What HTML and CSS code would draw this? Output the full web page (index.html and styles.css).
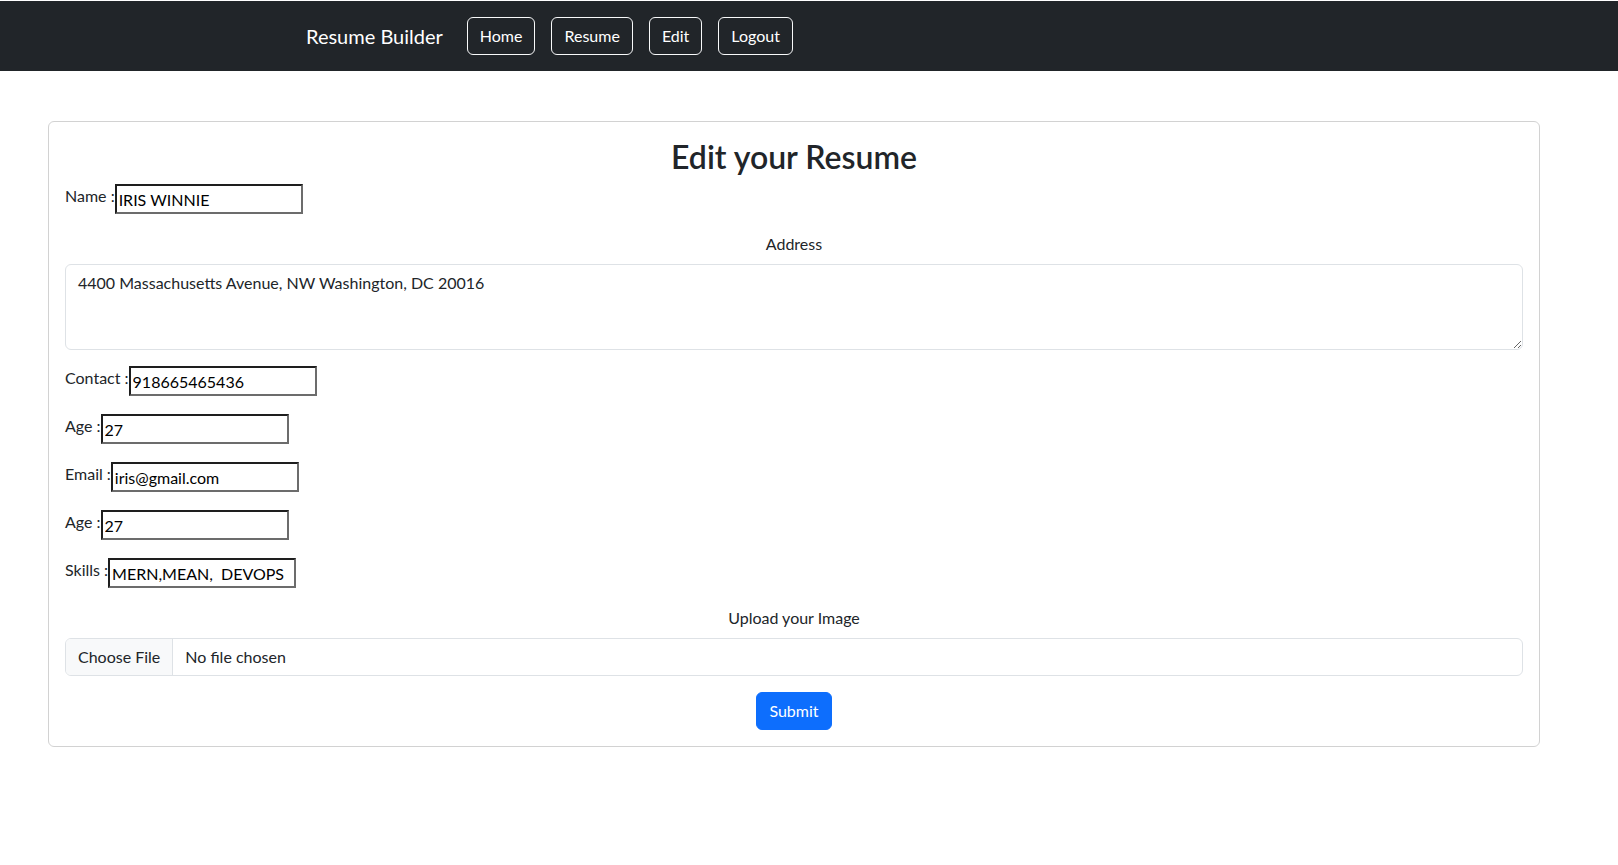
FILE: index.html
```html
<!DOCTYPE html>
<html lang="en">
<head>
<meta charset="utf-8">
<title>Resume Builder</title>
<link rel="stylesheet" href="styles.css">
</head>
<body>
<nav class="navbar">
  <span class="brand">Resume Builder</span>
  <a class="nav-btn" href="#">Home</a>
  <a class="nav-btn" href="#">Resume</a>
  <a class="nav-btn" href="#">Edit</a>
  <a class="nav-btn" href="#">Logout</a>
</nav>
<main class="page">
  <form class="card">
    <h2 class="title">Edit your Resume</h2>
    <div class="field-row"><label class="field-label">Name :</label><input class="plain-input" type="text" value="IRIS WINNIE"></div>
    <label class="center-label">Address</label>
    <textarea class="area" rows="3">4400 Massachusetts Avenue, NW Washington, DC 20016</textarea>
    <div class="field-row"><label class="field-label">Contact :</label><input class="plain-input" type="text" value="918665465436"></div>
    <div class="field-row"><label class="field-label">Age :</label><input class="plain-input" type="text" value="27"></div>
    <div class="field-row"><label class="field-label">Email :</label><input class="plain-input" type="text" value="iris@gmail.com"></div>
    <div class="field-row"><label class="field-label">Age :</label><input class="plain-input" type="text" value="27"></div>
    <div class="field-row"><label class="field-label">Skills :</label><input class="plain-input" type="text" value="MERN,MEAN,  DEVOPS"></div>
    <label class="center-label">Upload your Image</label>
    <div class="file-input"><span class="file-btn">Choose File</span><span class="file-name">No file chosen</span></div>
    <div class="submit-row"><button class="btn-submit" type="button">Submit</button></div>
  </form>
</main>
</body>
</html>
```

FILE: styles.css
```css
* { box-sizing: border-box; }
body {
  margin: 0;
  font-family: Lato, "Open Sans", sans-serif;
  font-size: 16px;
  line-height: 1.5;
  color: #212529;
  background: #fff;
}
.navbar {
  margin-top: 1px;
  height: 70px;
  background: #212529;
  display: flex;
  align-items: center;
  padding-left: 306px;
}
.brand {
  color: #fff;
  font-size: 20px;
  line-height: 30px;
  margin-right: 24px;
}
.nav-btn {
  color: #fff;
  text-decoration: none;
  border: 1px solid #f8f9fa;
  border-radius: 6px;
  padding: 6px 12px;
  line-height: 24px;
  margin-right: 16px;
}
.page { padding-top: 50px; }
.card {
  margin-left: 48px;
  width: 1492px;
  border: 1px solid #d2d2d2;
  border-radius: 6px;
  padding: 16px;
}
.title {
  margin: 0 0 8px;
  font-size: 32px;
  font-weight: 600;
  line-height: 1.2;
  text-align: center;
}
.field-row {
  display: flex;
  align-items: flex-start;
  height: 32px;
  margin-bottom: 16px;
}
.field-label { line-height: 24px; }
.plain-input {
  width: 188px;
  height: 30px;
  margin: 0;
  padding: 1px 2px;
  border-width: 2px;
  border-style: solid;
  border-color: #1e1e1e #6c6c6c #6c6c6c #1e1e1e;
  font: inherit;
  line-height: 24px;
  color: #000;
  background: #fff;
}
.center-label {
  display: block;
  text-align: center;
  margin-bottom: 8px;
  line-height: 24px;
}
.area {
  display: block;
  width: 100%;
  height: 86px;
  margin: 0 0 16px;
  padding: 6px 12px;
  border: 1px solid #dee2e6;
  border-radius: 6px;
  font: inherit;
  line-height: 24px;
  color: #212529;
  resize: vertical;
}
.file-input {
  display: flex;
  height: 38px;
  border: 1px solid #dee2e6;
  border-radius: 6px;
  overflow: hidden;
  margin-bottom: 16px;
}
.file-btn {
  padding: 6px 12px;
  background: #f8f9fa;
  border-right: 1px solid #dee2e6;
  line-height: 24px;
}
.file-name {
  padding: 6px 12px;
  line-height: 24px;
}
.submit-row { text-align: center; }
.btn-submit {
  font: inherit;
  line-height: 24px;
  color: #fff;
  background: #0d6efd;
  border: 1px solid #0d6efd;
  border-radius: 6px;
  padding: 6px 12px;
}
```
